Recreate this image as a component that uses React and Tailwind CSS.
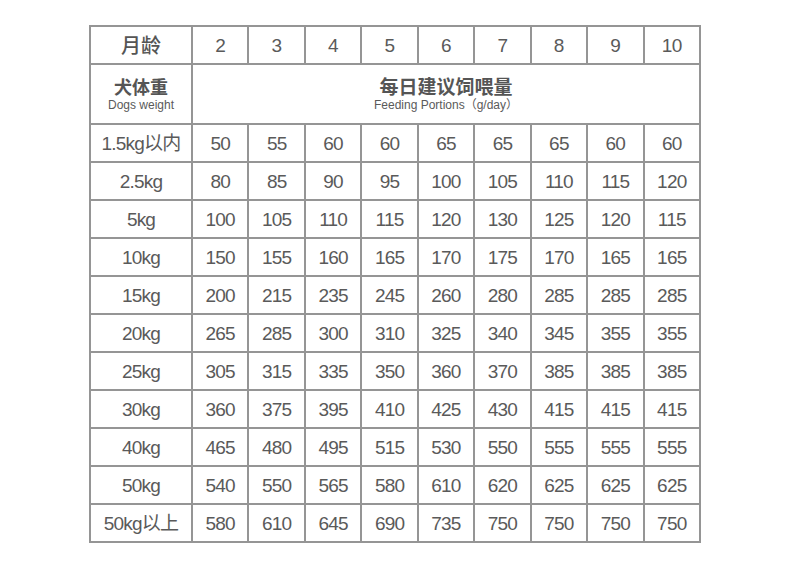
const MONTHS = [2, 3, 4, 5, 6, 7, 8, 9, 10];

const ROWS = [
  ['1.5kg以内', 50, 55, 60, 60, 65, 65, 65, 60, 60],
  ['2.5kg', 80, 85, 90, 95, 100, 105, 110, 115, 120],
  ['5kg', 100, 105, 110, 115, 120, 130, 125, 120, 115],
  ['10kg', 150, 155, 160, 165, 170, 175, 170, 165, 165],
  ['15kg', 200, 215, 235, 245, 260, 280, 285, 285, 285],
  ['20kg', 265, 285, 300, 310, 325, 340, 345, 355, 355],
  ['25kg', 305, 315, 335, 350, 360, 370, 385, 385, 385],
  ['30kg', 360, 375, 395, 410, 425, 430, 415, 415, 415],
  ['40kg', 465, 480, 495, 515, 530, 550, 555, 555, 555],
  ['50kg', 540, 550, 565, 580, 610, 620, 625, 625, 625],
  ['50kg以上', 580, 610, 645, 690, 735, 750, 750, 750, 750],
];

const cell = 'bg-white flex items-center justify-center';

export default function App() {
  return (
    <div
      className="w-[790px] h-[564px] bg-white pt-[25px] text-[#5a5a5a]"
      style={{ fontFamily: '"Liberation Sans", Arial, "Noto Sans CJK SC", sans-serif' }}
    >
      <div className="mx-auto w-[612px] grid grid-cols-[100px_repeat(9,1fr)] grid-rows-[36px_58px_repeat(11,36px)] gap-[2px] p-[2px] bg-[#959595]">
        <div className={`${cell} text-[20px] font-medium text-[#555] pt-[2px]`}>月龄</div>
        {MONTHS.map(m => (
          <div key={m} className={`${cell} text-[19px] tracking-[-0.5px] pt-[2px]`}>{m}</div>
        ))}

        <div className={`${cell} flex-col pt-[2px]`}>
          <div className="text-[18px] leading-[20px] font-bold text-[#555]">犬体重</div>
          <div className="text-[12px] leading-[13px] mt-[1px]">Dogs weight</div>
        </div>
        <div className={`${cell} col-span-9 flex-col pt-[2px]`}>
          <div className="text-[19px] leading-[20px] font-bold text-[#555]">每日建议饲喂量</div>
          <div className="text-[12px] leading-[13px] mt-[1px]">Feeding Portions（g/day）</div>
        </div>

        {ROWS.map(r => (
          <>
            <div key={r[0]} className={`${cell} text-[19px] tracking-[-0.8px] pt-[2px]`}>{r[0]}</div>
            {r.slice(1).map((v, i) => (
              <div key={r[0] + i} className={`${cell} text-[19px] tracking-[-0.8px] pt-[2px]`}>{v}</div>
            ))}
          </>
        ))}
      </div>
    </div>
  );
}
